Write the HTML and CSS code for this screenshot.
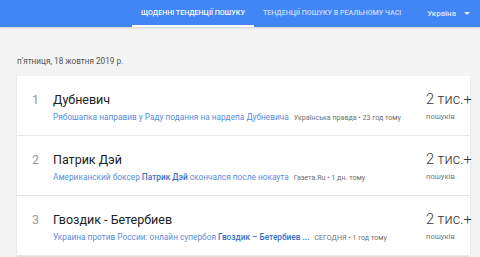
FILE: index.html
```html
<html>
<head>
<meta charset="utf-8">
<link rel="stylesheet" href="styles.css">
</head>
<body>
  <div class="bar">
    <div class="tabs">
      <span class="tab on">Щоденні тенденції пошуку</span>
      <span class="tab">Тенденції пошуку в реальному часі</span>
    </div>
    <div class="geo">Україна <span class="caret"></span></div>
  </div>
  <div class="page">
    <div class="date">п'ятниця, 18 жовтня 2019 р.</div>
    <div class="card">
      <div class="row">
        <span class="num">1</span>
        <div class="main">
          <div class="title">Дубневич</div>
          <div class="sub"><span class="link">Рябошапка направив у Раду подання на нардепа Дубневича</span><span class="src">Українська правда • 23 год тому</span></div>
        </div>
        <div class="count"><div class="big">2 тис.+</div><div class="small">пошуків</div></div>
      </div>
      <div class="row">
        <span class="num">2</span>
        <div class="main">
          <div class="title">Патрик Дэй</div>
          <div class="sub"><span class="link">Американский боксер <b>Патрик Дэй</b> скончался после нокаута</span><span class="src">Газета.Ru • 1 дн. тому</span></div>
        </div>
        <div class="count"><div class="big">2 тис.+</div><div class="small">пошуків</div></div>
      </div>
      <div class="row">
        <span class="num">3</span>
        <div class="main">
          <div class="title">Гвоздик - Бетербиев</div>
          <div class="sub"><span class="link">Украина против России: онлайн супербоя <b>Гвоздик – Бетербиев ...</b></span><span class="src">СЕГОДНЯ • 1 год тому</span></div>
        </div>
        <div class="count"><div class="big">2 тис.+</div><div class="small">пошуків</div></div>
      </div>
    </div>
  </div>
</body>
</html>
```

FILE: styles.css
```css
body {
  margin: 0;
  background: #f4f4f4;
  font-family: Roboto, "Liberation Sans", sans-serif;
  overflow: hidden;
}
.bar {
  height: 27px;
  background: #4285f4;
  display: flex;
  align-items: stretch;
  box-shadow: 0 1px 2px rgba(0,0,0,0.15);
}
.tabs {
  display: flex;
  margin-left: 132px;
}
.tab {
  display: flex;
  align-items: center;
  padding: 0 9px;
  font-size: 7.1px;
  font-weight: 500;
  text-transform: uppercase;
  color: rgba(255,255,255,0.72);
  border-bottom: 2px solid transparent;
  white-space: nowrap;
}
.tab.on {
  color: #fff;
  border-bottom-color: #fff;
}
.geo {
  margin-left: auto;
  margin-right: 10px;
  display: flex;
  align-items: center;
  font-size: 8px;
  font-weight: 500;
  color: rgba(255,255,255,0.85);
}
.caret {
  margin-left: 8px;
  border-left: 3px solid transparent;
  border-right: 3px solid transparent;
  border-top: 3px solid rgba(255,255,255,0.85);
}
.page {
  padding: 29px 10px 0 17px;
}
.date {
  font-size: 8.2px;
  color: #555;
  height: 20px;
}
.card {
  background: #fff;
  box-shadow: 0 1px 2px rgba(0,0,0,0.12);
}
.row {
  height: 60px;
  display: flex;
  align-items: flex-start;
  border-bottom: 1px solid #e6e6e6;
  box-sizing: border-box;
}
.num {
  width: 36px;
  padding-left: 15px;
  box-sizing: border-box;
  font-size: 12.5px;
  color: #999;
  padding-top: 16px;
}
.main {
  flex: 1;
  padding-top: 16px;
  min-width: 0;
}
.title {
  font-size: 12.5px;
  color: #222;
  height: 20px;
}
.sub {
  font-size: 8.3px;
  white-space: nowrap;
  overflow: hidden;
}
.link {
  color: #5b8dd9;
}
.link b {
  color: #3a6fc8;
  font-weight: 500;
}
.src {
  color: #707070;
  font-size: 7.1px;
  margin-left: 5px;
}
.count {
  width: 44px;
  padding-top: 15px;
  white-space: nowrap;
}
.big {
  font-size: 14.5px;
  font-weight: 300;
  color: #333;
  height: 21px;
}
.small {
  font-size: 7.6px;
  color: #777;
}
```
